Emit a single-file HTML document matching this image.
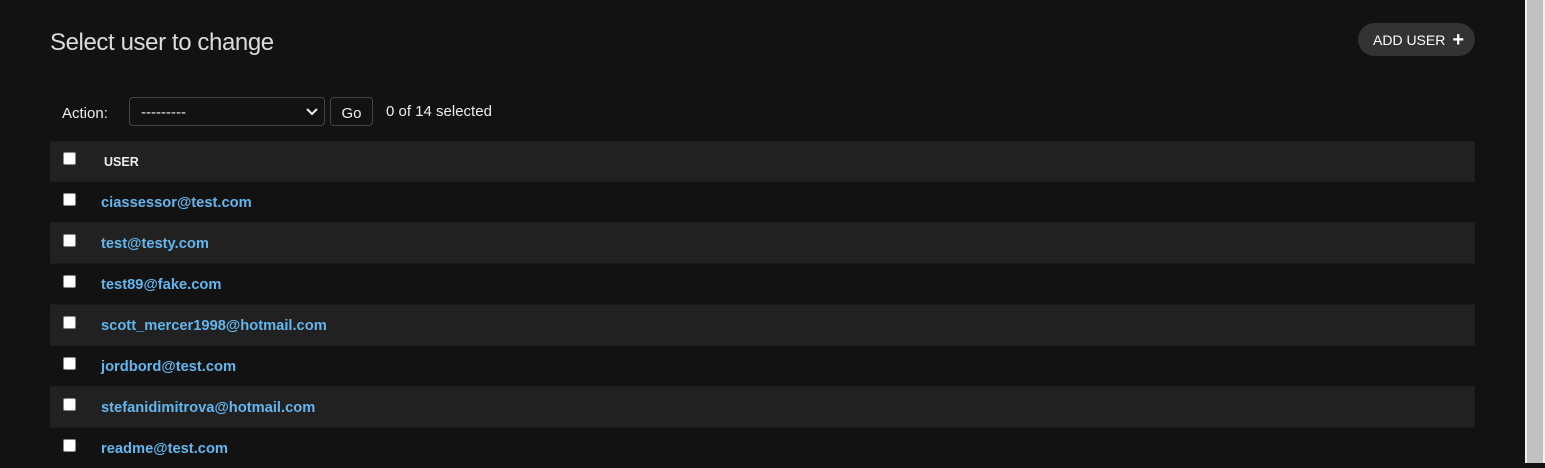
<!DOCTYPE html>
<html><head><style>
body{margin:0;width:1545px;height:463px;background:#121212;overflow:hidden;font-family:"Liberation Sans",sans-serif;position:relative}
.sb{position:absolute;left:1525px;top:0;width:20px;height:463px;background:#f0f0f0}
.sb div{position:absolute;left:2px;top:0;width:16px;height:463px;background:#c1c1c1}
h1{position:absolute;left:50px;top:29px;margin:0;font-weight:normal;font-size:24px;color:#dcdcdc;letter-spacing:-0.4px}
.add{position:absolute;left:1358px;top:23px;width:117px;height:33px;border-radius:17px;background:#333;color:#fff;font-size:14px;line-height:34px;box-sizing:border-box;padding-left:15px}
.add b{position:absolute;right:11px;top:0;font-size:20px}
.act{position:absolute;top:105px;left:62px;color:#eee;font-size:15px}
.sel{position:absolute;left:129px;top:97px;width:196px;height:29px;border:1px solid #444;border-radius:4px;box-sizing:border-box;color:#eee;font-size:15px;line-height:29px;padding-left:11px}
.sel svg{position:absolute;right:6px;top:9px}
.go{position:absolute;left:330px;top:97px;width:43px;height:29px;border:1px solid #444;border-radius:4px;box-sizing:border-box;color:#eee;font-size:15px;line-height:31px;text-align:center}
.cnt{position:absolute;left:386px;top:103px;color:#eee;font-size:15px}
.row{position:absolute;left:50px;width:1425px;height:41px;border-top:1px solid #1c1c1c;box-sizing:border-box}
.cb{position:absolute;left:13px;top:11px;width:13px;height:13px;background:#fff;border:1px solid #888;border-radius:2px;box-sizing:border-box}
.row a{position:absolute;left:51px;top:13px;color:#64b6ee;font-weight:bold;font-size:14.7px;text-decoration:none}
.hd{top:141px;height:40px;background:#212121}
.hd span{position:absolute;left:54px;top:13px;color:#eee;font-weight:bold;font-size:12.5px}
.l{background:#212121}
</style></head><body>
<h1>Select user to change</h1>
<div class="add">ADD USER <b>+</b></div>
<div class="act">Action:</div>
<div class="sel">---------<svg width="12" height="9" viewBox="0 0 12 9"><path d="M1 2l5 5 5-5" stroke="#eee" stroke-width="2" fill="none"/></svg></div>
<div class="go">Go</div>
<div class="cnt">0 of 14 selected</div>
<div class="row hd"><div class="cb" style="top:10px"></div><span>USER</span></div>
<div class="row" style="top:181px"><div class="cb"></div><a>ciassessor@test.com</a></div>
<div class="row l" style="top:222px"><div class="cb"></div><a>test@testy.com</a></div>
<div class="row" style="top:263px"><div class="cb"></div><a>test89@fake.com</a></div>
<div class="row l" style="top:304px"><div class="cb"></div><a>scott_mercer1998@hotmail.com</a></div>
<div class="row" style="top:345px"><div class="cb"></div><a>jordbord@test.com</a></div>
<div class="row l" style="top:386px"><div class="cb"></div><a>stefanidimitrova@hotmail.com</a></div>
<div class="row" style="top:427px"><div class="cb"></div><a>readme@test.com</a></div>
<div class="sb"><div></div></div>
</body></html>
